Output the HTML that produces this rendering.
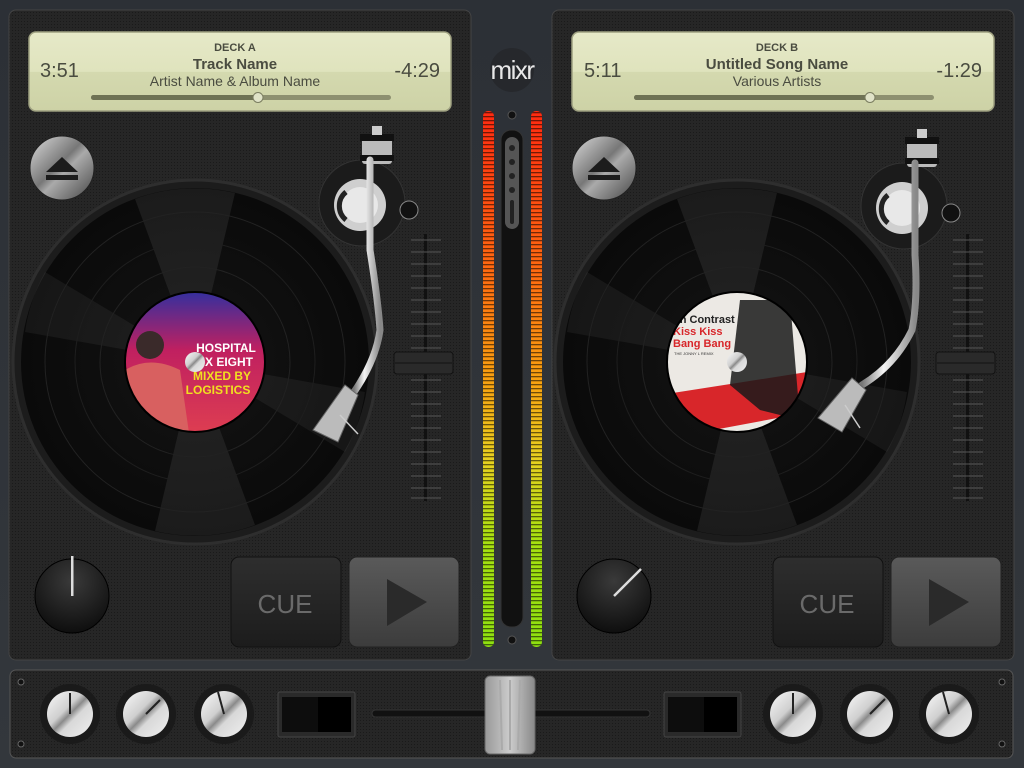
<!DOCTYPE html>
<html><head><meta charset="utf-8"><style>
html,body{margin:0;padding:0;background:#2a2d32;width:1024px;height:768px;overflow:hidden}
svg{display:block}
text{font-family:"Liberation Sans",sans-serif}
</style></head><body>
<svg width="1024" height="768" viewBox="0 0 1024 768" xmlns="http://www.w3.org/2000/svg">
<defs>
<pattern id="dots" width="3" height="3" patternUnits="userSpaceOnUse"><rect width="3" height="3" fill="#262626"/><rect width="1" height="1" fill="#1a1a1a"/></pattern>
<linearGradient id="bg" x1="0" y1="0" x2="0" y2="1"><stop offset="0" stop-color="#2c3036"/><stop offset="1" stop-color="#33373c"/></linearGradient>
<linearGradient id="lcd" x1="0" y1="0" x2="0" y2="1"><stop offset="0" stop-color="#e6e9c8"/><stop offset="0.5" stop-color="#dfe3bd"/><stop offset="0.51" stop-color="#d4d9af"/><stop offset="1" stop-color="#cdd2a6"/></linearGradient>
<radialGradient id="vinyl" cx="0.5" cy="0.5" r="0.5"><stop offset="0" stop-color="#141414"/><stop offset="1" stop-color="#0a0a0a"/></radialGradient>
<linearGradient id="meter" x1="0" y1="0" x2="0" y2="1"><stop offset="0" stop-color="#ff2a10"/><stop offset="0.3" stop-color="#ff6a10"/><stop offset="0.5" stop-color="#f8a010"/><stop offset="0.65" stop-color="#e8d020"/><stop offset="0.8" stop-color="#a8e010"/><stop offset="1" stop-color="#8ee010"/></linearGradient>
<pattern id="seg" width="4" height="4" patternUnits="userSpaceOnUse"><rect width="4" height="1.3" fill="#000" opacity="0.55"/></pattern>
<radialGradient id="knobBlack" cx="0.5" cy="0.3" r="0.7"><stop offset="0" stop-color="#3a3a3a"/><stop offset="1" stop-color="#0e0e0e"/></radialGradient>
<linearGradient id="silver" x1="0" y1="0" x2="1" y2="1"><stop offset="0" stop-color="#fafafa"/><stop offset="0.4" stop-color="#cfcfcf"/><stop offset="0.5" stop-color="#8a8a8a"/><stop offset="0.6" stop-color="#d8d8d8"/><stop offset="1" stop-color="#f0f0f0"/></linearGradient>
<linearGradient id="eject" x1="0" y1="0" x2="1" y2="1"><stop offset="0" stop-color="#ddd"/><stop offset="0.45" stop-color="#777"/><stop offset="0.55" stop-color="#aaa"/><stop offset="1" stop-color="#444"/></linearGradient>
<linearGradient id="cue" x1="0" y1="0" x2="0" y2="1"><stop offset="0" stop-color="#2e2e2e"/><stop offset="1" stop-color="#1c1c1c"/></linearGradient>
<linearGradient id="play" x1="0" y1="0" x2="0" y2="1"><stop offset="0" stop-color="#5a5a5a"/><stop offset="1" stop-color="#3c3c3c"/></linearGradient>
<linearGradient id="arm" x1="0" y1="0" x2="1" y2="0"><stop offset="0" stop-color="#777"/><stop offset="0.4" stop-color="#f4f4f4"/><stop offset="1" stop-color="#888"/></linearGradient>
<linearGradient id="xf" x1="0" y1="0" x2="1" y2="0"><stop offset="0" stop-color="#999"/><stop offset="0.5" stop-color="#ccc"/><stop offset="1" stop-color="#888"/></linearGradient>
<linearGradient id="hosp" x1="0" y1="0" x2="0" y2="1"><stop offset="0" stop-color="#3030a0"/><stop offset="0.4" stop-color="#c02060"/><stop offset="1" stop-color="#e04050"/></linearGradient>
<clipPath id="labA"><circle cx="195" cy="362" r="70"/></clipPath>
<clipPath id="labB"><circle cx="737" cy="362" r="70"/></clipPath>
<g id="shine">
<path d="M0 0 L-60 -163 A174 174 0 0 1 40 -169 Z" fill="#fff" opacity="0.07"/>
<path d="M0 0 L60 163 A174 174 0 0 1 -40 169 Z" fill="#fff" opacity="0.07"/>
<path d="M0 0 L-170 -30 A174 174 0 0 1 -150 -90 Z" fill="#fff" opacity="0.05"/>
<path d="M0 0 L170 30 A174 174 0 0 1 150 90 Z" fill="#fff" opacity="0.05"/>
</g>
</defs>

<rect width="1024" height="768" fill="url(#bg)"/>

<rect x="9" y="10" width="462" height="650" rx="7" fill="url(#dots)" stroke="#444" stroke-width="1"/>
<rect x="552" y="10" width="462" height="650" rx="7" fill="url(#dots)" stroke="#444" stroke-width="1"/>
<rect x="10" y="670" width="1003" height="88" rx="6" fill="url(#dots)" stroke="#555" stroke-width="1"/>

<g>
<rect x="29" y="32" width="422" height="79" rx="7" fill="url(#lcd)" stroke="#9ea080" stroke-width="1.5"/>
<text x="235" y="51" font-size="11" font-weight="bold" fill="#4a4c40" text-anchor="middle">DECK A</text>
<text x="235" y="69" font-size="15" font-weight="bold" fill="#4a4c40" text-anchor="middle">Track Name</text>
<text x="235" y="86" font-size="14" fill="#4a4c40" text-anchor="middle">Artist Name &amp; Album Name</text>
<text x="40" y="77" font-size="20" fill="#4a4c40">3:51</text>
<text x="440" y="77" font-size="20" fill="#4a4c40" text-anchor="end">-4:29</text>
<rect x="91" y="95" width="300" height="5" rx="2.5" fill="#8d9070"/>
<rect x="91" y="95" width="166" height="5" rx="2.5" fill="#6e7254"/>
<circle cx="258" cy="97.5" r="5" fill="#e0e3c8" stroke="#7a7d60"/>
</g>
<g>
<rect x="572" y="32" width="422" height="79" rx="7" fill="url(#lcd)" stroke="#9ea080" stroke-width="1.5"/>
<text x="777" y="51" font-size="11" font-weight="bold" fill="#4a4c40" text-anchor="middle">DECK B</text>
<text x="777" y="69" font-size="15" font-weight="bold" fill="#4a4c40" text-anchor="middle">Untitled Song Name</text>
<text x="777" y="86" font-size="14" fill="#4a4c40" text-anchor="middle">Various Artists</text>
<text x="584" y="77" font-size="20" fill="#4a4c40">5:11</text>
<text x="982" y="77" font-size="20" fill="#4a4c40" text-anchor="end">-1:29</text>
<rect x="634" y="95" width="300" height="5" rx="2.5" fill="#8d9070"/>
<rect x="634" y="95" width="236" height="5" rx="2.5" fill="#6e7254"/>
<circle cx="870" cy="97.5" r="5" fill="#e0e3c8" stroke="#7a7d60"/>
</g>

<circle cx="512" cy="70" r="22" fill="#26282c"/>
<text x="512" y="79" font-size="26" fill="#e8e8e8" text-anchor="middle" letter-spacing="-1.5">mixr</text>
<rect x="483" y="111" width="11" height="536" rx="5" fill="url(#meter)"/>
<rect x="483" y="111" width="11" height="536" rx="5" fill="url(#seg)"/>
<rect x="531" y="111" width="11" height="536" rx="5" fill="url(#meter)"/>
<rect x="531" y="111" width="11" height="536" rx="5" fill="url(#seg)"/>
<circle cx="512" cy="115" r="4" fill="#111" stroke="#555"/>
<circle cx="512" cy="640" r="4" fill="#111" stroke="#555"/>
<rect x="501" y="130" width="22" height="497" rx="10" fill="#111" stroke="#333"/>
<rect x="505" y="137" width="14" height="92" rx="7" fill="#555"/>
<circle cx="512" cy="148" r="3" fill="#222"/><circle cx="512" cy="162" r="3" fill="#222"/><circle cx="512" cy="176" r="3" fill="#222"/><circle cx="512" cy="190" r="3" fill="#222"/>
<rect x="510" y="200" width="4" height="24" rx="2" fill="#222"/>

<g>
<circle cx="62" cy="168" r="32" fill="url(#eject)" stroke="#222"/>
<path d="M46 172 L62 157 L78 172 Z" fill="#1c1c1c"/><rect x="46" y="175" width="32" height="5" fill="#1c1c1c"/>
<circle cx="195" cy="362" r="182" fill="#1c1c1c" stroke="#2e2e2e" stroke-width="3"/>
<circle cx="195" cy="362" r="174" fill="url(#vinyl)"/>
<use href="#shine" x="195" y="362"/>
<circle cx="195" cy="362" r="150" fill="none" stroke="#222"/>
<circle cx="195" cy="362" r="120" fill="none" stroke="#1e1e1e"/>
<circle cx="195" cy="362" r="95" fill="none" stroke="#222"/>
<g clip-path="url(#labA)">
<rect x="120" y="290" width="150" height="150" fill="url(#hosp)"/>
<path d="M125 370 Q150 355 180 370 L190 440 L120 440 Z" fill="#d86060"/>
<circle cx="150" cy="345" r="14" fill="#3a2a2a"/>
<text x="226" y="352" font-size="12" font-weight="bold" fill="#fff" text-anchor="middle">HOSPITAL</text>
<text x="224" y="366" font-size="12" font-weight="bold" fill="#fff" text-anchor="middle">MX EIGHT</text>
<text x="222" y="380" font-size="12" font-weight="bold" fill="#f0e020" text-anchor="middle">MIXED BY</text>
<text x="218" y="394" font-size="12" font-weight="bold" fill="#f0e020" text-anchor="middle">LOGISTICS</text>
</g>
<circle cx="195" cy="362" r="70" fill="none" stroke="#000" stroke-width="2"/>
<circle cx="195" cy="362" r="10" fill="url(#silver)"/>
<rect x="424" y="234" width="3" height="267" fill="#111"/>
<g stroke="#555"><path d="M411 240h30M411 252h30M411 264h30M411 276h30M411 288h30M411 300h30M411 312h30M411 324h30M411 336h30M411 348h30M411 380h30M411 392h30M411 404h30M411 416h30M411 428h30M411 440h30M411 452h30M411 464h30M411 476h30M411 488h30M411 498h30"/></g>
<rect x="394" y="352" width="59" height="22" rx="3" fill="#2a2a2a" stroke="#111"/>
<line x1="395" y1="363" x2="452" y2="363" stroke="#111"/>
<circle cx="362" cy="203" r="43" fill="#1b1b1b" stroke="#333"/>
<circle cx="360" cy="205" r="26" fill="#cfcfcf"/>
<circle cx="360" cy="205" r="18" fill="#e8e8e8"/>
<path d="M346 192 a18 18 0 0 0 0 28" stroke="#222" stroke-width="5" fill="none"/>
<circle cx="409" cy="210" r="9" fill="#111" stroke="#888"/>
<rect x="362" y="134" width="30" height="30" rx="3" fill="#bbb"/>
<rect x="360" y="134" width="34" height="7" fill="#111"/>
<rect x="360" y="155" width="34" height="6" fill="#111"/>
<rect x="372" y="126" width="10" height="9" fill="#ccc"/>
<path d="M370 160 L370 250 Q378 300 380 330 Q376 360 354 392" stroke="url(#arm)" stroke-width="7" fill="none" stroke-linecap="round"/>
<path d="M345 385 L358 395 L338 442 L313 430 Z" fill="#bbb" stroke="#666"/>
<line x1="340" y1="415" x2="358" y2="434" stroke="#ccc" stroke-width="1.5"/>
<circle cx="72" cy="596" r="37" fill="url(#knobBlack)" stroke="#000"/>
<rect x="71" y="556" width="2.5" height="40" fill="#ddd"/>
<rect x="231" y="557" width="110" height="90" rx="8" fill="url(#cue)" stroke="#111"/>
<text x="285" y="613" font-size="26" fill="#6a6a6a" text-anchor="middle">CUE</text>
<rect x="349" y="557" width="110" height="90" rx="8" fill="url(#play)" stroke="#222"/>
<path d="M387 579 L427 602 L387 626 Z" fill="#2a2a2a"/>
</g>

<g>
<circle cx="604" cy="168" r="32" fill="url(#eject)" stroke="#222"/>
<path d="M588 172 L604 157 L620 172 Z" fill="#1c1c1c"/><rect x="588" y="175" width="32" height="5" fill="#1c1c1c"/>
<circle cx="737" cy="362" r="182" fill="#1c1c1c" stroke="#2e2e2e" stroke-width="3"/>
<circle cx="737" cy="362" r="174" fill="url(#vinyl)"/>
<use href="#shine" x="737" y="362"/>
<circle cx="737" cy="362" r="150" fill="none" stroke="#222"/>
<circle cx="737" cy="362" r="120" fill="none" stroke="#1e1e1e"/>
<circle cx="737" cy="362" r="95" fill="none" stroke="#222"/>
<g clip-path="url(#labB)">
<rect x="660" y="290" width="160" height="150" fill="#ece9e4"/>
<path d="M660 395 L820 370 L820 410 L660 440 Z" fill="#d8262a"/>
<path d="M740 300 L790 300 L800 420 L760 410 L730 385 Z" fill="#1a1a1a" opacity="0.85"/>
<text x="673" y="323" font-size="11" font-weight="bold" fill="#222">gh Contrast</text>
<text x="673" y="335" font-size="11" font-weight="bold" fill="#d8262a">Kiss Kiss</text>
<text x="673" y="347" font-size="11" font-weight="bold" fill="#d8262a">Bang Bang</text>
<text x="674" y="355" font-size="4" fill="#333">THE JONNY L REMIX</text>
</g>
<circle cx="737" cy="362" r="70" fill="none" stroke="#000" stroke-width="2"/>
<circle cx="737" cy="362" r="10" fill="url(#silver)"/>
<rect x="966" y="234" width="3" height="267" fill="#111"/>
<g stroke="#555"><path d="M953 240h30M953 252h30M953 264h30M953 276h30M953 288h30M953 300h30M953 312h30M953 324h30M953 336h30M953 348h30M953 380h30M953 392h30M953 404h30M953 416h30M953 428h30M953 440h30M953 452h30M953 464h30M953 476h30M953 488h30M953 498h30"/></g>
<rect x="936" y="352" width="59" height="22" rx="3" fill="#2a2a2a" stroke="#111"/>
<line x1="937" y1="363" x2="994" y2="363" stroke="#111"/>
<circle cx="904" cy="206" r="43" fill="#1b1b1b" stroke="#333"/>
<circle cx="902" cy="208" r="26" fill="#cfcfcf"/>
<circle cx="902" cy="208" r="18" fill="#e8e8e8"/>
<path d="M888 195 a18 18 0 0 0 0 28" stroke="#222" stroke-width="5" fill="none"/>
<circle cx="951" cy="213" r="9" fill="#111" stroke="#888"/>
<rect x="907" y="137" width="30" height="30" rx="3" fill="#bbb"/>
<rect x="905" y="137" width="34" height="7" fill="#111"/>
<rect x="905" y="158" width="34" height="6" fill="#111"/>
<rect x="917" y="129" width="10" height="9" fill="#ccc"/>
<path d="M915 163 L915 255 Q918 300 912 330 Q895 365 862 385" stroke="url(#arm)" stroke-width="7" fill="none" stroke-linecap="round"/>
<path d="M852 378 L866 390 L842 432 L818 418 Z" fill="#bbb" stroke="#666"/>
<line x1="845" y1="405" x2="860" y2="428" stroke="#ccc" stroke-width="1.5"/>
<circle cx="614" cy="596" r="37" fill="url(#knobBlack)" stroke="#000"/>
<line x1="614" y1="596" x2="641" y2="569" stroke="#ddd" stroke-width="2.5"/>
<rect x="773" y="557" width="110" height="90" rx="8" fill="url(#cue)" stroke="#111"/>
<text x="827" y="613" font-size="26" fill="#6a6a6a" text-anchor="middle">CUE</text>
<rect x="891" y="557" width="110" height="90" rx="8" fill="url(#play)" stroke="#222"/>
<path d="M929 579 L969 602 L929 626 Z" fill="#2a2a2a"/>
</g>

<g fill="#111" stroke="#666"><circle cx="21" cy="682" r="3"/><circle cx="21" cy="744" r="3"/><circle cx="1002" cy="682" r="3"/><circle cx="1002" cy="744" r="3"/></g>
<g>
<circle cx="70" cy="714" r="30" fill="#1a1a1a"/><circle cx="70" cy="714" r="23" fill="url(#silver)"/><line x1="70" y1="714" x2="70" y2="693" stroke="#222" stroke-width="2"/>
<circle cx="146" cy="714" r="30" fill="#1a1a1a"/><circle cx="146" cy="714" r="23" fill="url(#silver)"/><line x1="146" y1="714" x2="160" y2="700" stroke="#222" stroke-width="2"/>
<circle cx="224" cy="714" r="30" fill="#1a1a1a"/><circle cx="224" cy="714" r="23" fill="url(#silver)"/><line x1="224" y1="714" x2="218" y2="692" stroke="#222" stroke-width="2"/>
<circle cx="793" cy="714" r="30" fill="#1a1a1a"/><circle cx="793" cy="714" r="23" fill="url(#silver)"/><line x1="793" y1="714" x2="793" y2="693" stroke="#222" stroke-width="2"/>
<circle cx="870" cy="714" r="30" fill="#1a1a1a"/><circle cx="870" cy="714" r="23" fill="url(#silver)"/><line x1="870" y1="714" x2="885" y2="699" stroke="#222" stroke-width="2"/>
<circle cx="949" cy="714" r="30" fill="#1a1a1a"/><circle cx="949" cy="714" r="23" fill="url(#silver)"/><line x1="949" y1="714" x2="943" y2="692" stroke="#222" stroke-width="2"/>
</g>
<rect x="278" y="692" width="77" height="45" rx="2" fill="#2a2a2a" stroke="#444"/>
<rect x="282" y="697" width="69" height="35" fill="#0d0d0d"/><rect x="318" y="697" width="33" height="35" fill="#000"/>
<rect x="664" y="692" width="77" height="45" rx="2" fill="#2a2a2a" stroke="#444"/>
<rect x="668" y="697" width="69" height="35" fill="#0d0d0d"/><rect x="704" y="697" width="33" height="35" fill="#000"/>
<rect x="372" y="710" width="278" height="7" rx="3.5" fill="#111" stroke="#333"/>
<rect x="485" y="676" width="50" height="78" rx="5" fill="url(#xf)" stroke="#666"/>
<path d="M500 680 L502 750 M510 680 L510 750 M520 680 L518 750" stroke="#aaa" stroke-width="2"/>
</svg>
</body></html>
